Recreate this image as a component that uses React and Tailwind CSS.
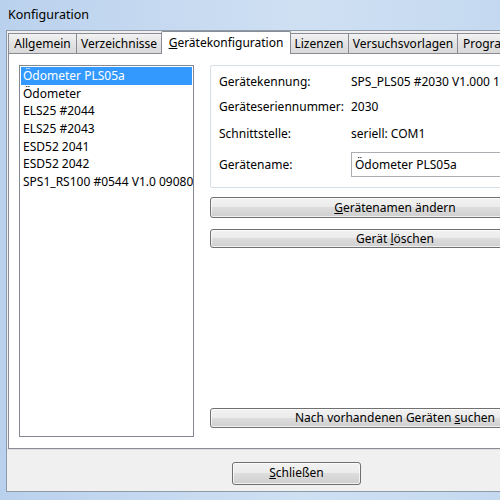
import React, { useState } from "react";

const devices = [
  "Ödometer PLS05a",
  "Ödometer",
  "ELS25 #2044",
  "ELS25 #2043",
  "ESD52 2041",
  "ESD52 2042",
  "SPS1_RS100 #0544 V1.0 09080",
];

const tabs = [
  { label: "Allgemein", w: "w-[69px]" },
  { label: "Verzeichnisse", w: "w-[85px]" },
  { label: "Gerätekonfiguration", w: "w-[130px]", active: true },
  { label: "Lizenzen", w: "w-[59px]" },
  { label: "Versuchsvorlagen", w: "w-[109px]" },
  { label: "Programm", w: "w-[90px]" },
];

// classic Win7 style push button
const WinButton = ({ children, className = "" }) => (
  <button
    className={
      "rounded-[3px] border border-[#707070] bg-[linear-gradient(#f2f2f2_0%,#ebebeb_49%,#dddddd_50%,#cfcfcf_100%)] text-[12px] text-black shadow-[inset_0_0_0_1px_rgba(255,255,255,0.7)] " +
      className
    }
  >
    {children}
  </button>
);

const InfoRow = ({ label, children, className = "" }) => (
  <div className={"flex items-center " + className}>
    <span className="w-[132px] shrink-0">{label}</span>
    {children}
  </div>
);

export default function App() {
  const [selected, setSelected] = useState(0);

  return (
    <div
      className="w-[500px] h-[500px] overflow-hidden bg-[linear-gradient(90deg,#bad1ed,#cfe0f3_60%,#c4d9f0)] text-black"
      style={{ fontFamily: '"Noto Sans", "Open Sans", sans-serif' }}
    >
      {/* title bar */}
      <div className="h-[30px] flex items-center pl-[8px] text-[12.5px]">Konfiguration</div>

      {/* client area */}
      <div className="ml-[6px] w-[610px] h-[462px] border border-[#8e9aa8] bg-[#f0f0f0] flex flex-col">
        {/* tab strip */}
        <div className="h-[22px] flex items-end pl-[1px] text-[12px]">
          {tabs.map((t) =>
            t.active ? (
              <div
                key={t.label}
                className={`${t.w} h-[23px] -mx-[1px] -mb-[1px] relative z-10 flex items-center justify-center border border-b-0 border-[#898c95] bg-white rounded-t-[2px]`}
              >
                <span>
                  <span className="underline">G</span>erätekonfiguration
                </span>
              </div>
            ) : (
              <div
                key={t.label}
                className={`${t.w} h-[20px] flex items-center justify-center overflow-hidden whitespace-nowrap border border-l-0 first:border-l border-b-0 border-[#898c95] bg-[linear-gradient(#f2f2f2,#e3e3e3_50%,#d9d9d9)] last:justify-start last:pl-[5px]`}
              >
                {t.label}
              </div>
            )
          )}
        </div>

        {/* tab page */}
        <div className="ml-[1px] h-[396px] border border-[#898c95] bg-white flex gap-[16px] pl-[10px] pt-[11px] pb-[11px] text-[12px]">
          {/* device list */}
          <div className="w-[175px] shrink-0 border border-[#828790] p-[1px] overflow-hidden">
            {devices.map((d, i) => (
              <div
                key={d}
                onClick={() => setSelected(i)}
                className={`h-[17.7px] pl-[2px] flex items-center whitespace-nowrap ${
                  i === selected ? "bg-[#3399ff] text-white" : ""
                }`}
              >
                {d}
              </div>
            ))}
          </div>

          {/* details */}
          <div className="w-[370px] flex flex-col">
            <div className="border border-[#d5dfe5] rounded-[2px] pl-[8px] pt-[6px] pb-[10px] flex flex-col whitespace-nowrap">
              <InfoRow label="Gerätekennung:">
                <span className="h-[20px] flex items-center">SPS_PLS05 #2030 V1.000 1</span>
              </InfoRow>
              <InfoRow label="Geräteseriennummer:" className="mt-[5px]">
                <span className="h-[20px] flex items-center">2030</span>
              </InfoRow>
              <InfoRow label="Schnittstelle:" className="mt-[7px]">
                <span className="h-[20px] flex items-center">seriell: COM1</span>
              </InfoRow>
              <InfoRow label="Gerätename:" className="mt-[8px]">
                <div className="flex-1 h-[25px] border border-[#abadb3] flex items-center pl-[3px]">
                  Ödometer PLS05a
                </div>
              </InfoRow>
            </div>

            <WinButton className="mt-[9px] h-[21px]">
              <span className="underline">G</span>erätenamen ändern
            </WinButton>
            <WinButton className="mt-[11px] h-[19px]">
              Gerät <span className="underline">l</span>öschen
            </WinButton>

            <WinButton className="mt-auto mb-[9px] h-[20px]">
              Nach vorhandenen Geräten <span className="underline">s</span>uchen
            </WinButton>
          </div>
        </div>

        {/* footer */}
        <div className="flex-1 border-t border-[#dfdfdf] pl-[225px] pt-[9px]">
          <WinButton className="w-[129px] h-[23px]">
            <span className="underline">S</span>chließen
          </WinButton>
        </div>
      </div>
    </div>
  );
}
